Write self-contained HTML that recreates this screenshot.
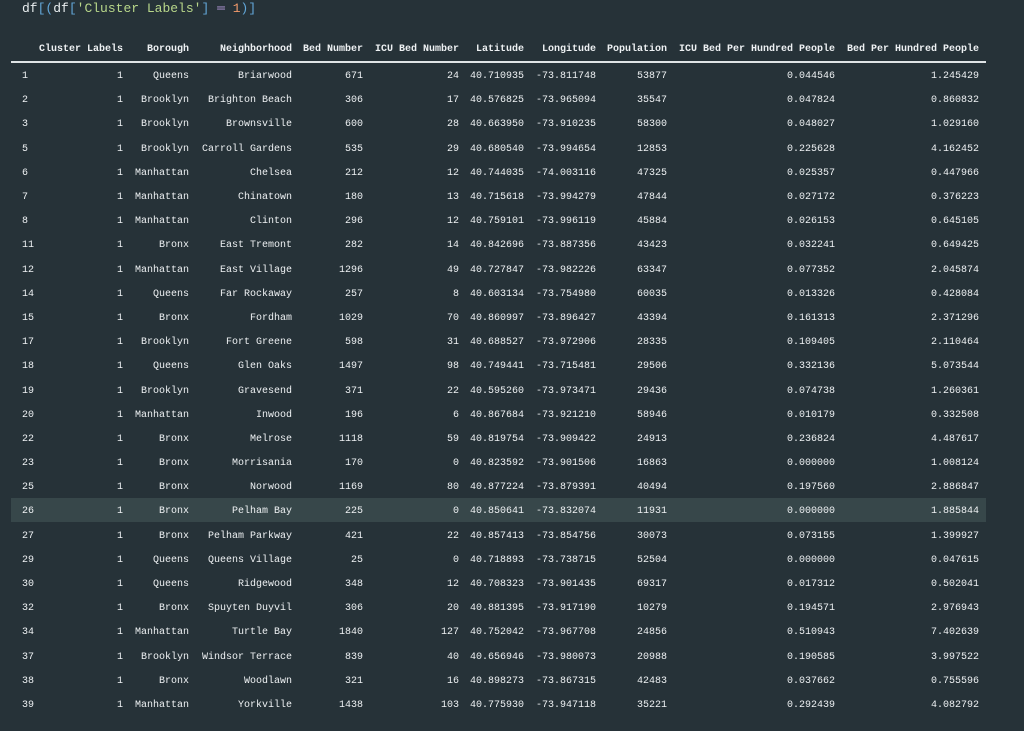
<!DOCTYPE html>
<html><head><meta charset="utf-8">
<style>
html,body{margin:0;padding:0;background:#263238;width:1024px;height:731px;overflow:hidden}
body{font-family:"Liberation Mono","DejaVu Sans Mono",monospace;color:#eef1f3;font-size:10px;position:relative}
.code{position:absolute;left:22px;top:0px;font-size:13px;line-height:18px;color:#e9eef0;white-space:pre}
.b{color:#62a6d8}.s{color:#b8d78a}.o{color:#b79cde}.n{color:#f39a6b}
.r{position:absolute;left:11px;width:975px;height:24px}
.r span{position:absolute;top:8px;white-space:pre;text-align:right;line-height:12px}
.hd span{font-weight:bold}
.r span.i{left:11px;text-align:left}
.c1{right:calc(975px - 112px)}
.c2{right:calc(975px - 178px)}
.c3{right:calc(975px - 281px)}
.c4{right:calc(975px - 352px)}
.c5{right:calc(975px - 448px)}
.c6{right:calc(975px - 513px)}
.c7{right:calc(975px - 585px)}
.c8{right:calc(975px - 656px)}
.c9{right:calc(975px - 824px)}
.c10{right:calc(975px - 968px)}
.rule{position:absolute;left:11px;width:975px;top:61px;height:2px;background:#dfe4e6}
.hl{background:#37474a}
</style></head><body>
<div class="code">df<span class="b">[(</span>df<span class="b">[</span><span class="s">'Cluster Labels'</span><span class="b">]</span> <span class="o">═</span> <span class="n">1</span><span class="b">)]</span></div>
<div class="r hd" style="top:36px"><span class="c1">Cluster Labels</span><span class="c2">Borough</span><span class="c3">Neighborhood</span><span class="c4">Bed Number</span><span class="c5">ICU Bed Number</span><span class="c6">Latitude</span><span class="c7">Longitude</span><span class="c8">Population</span><span class="c9">ICU Bed Per Hundred People</span><span class="c10">Bed Per Hundred People</span></div>
<div class="rule"></div>
<div class="r" style="top:63px"><span class="i">1</span><span class="c1">1</span><span class="c2">Queens</span><span class="c3">Briarwood</span><span class="c4">671</span><span class="c5">24</span><span class="c6">40.710935</span><span class="c7">-73.811748</span><span class="c8">53877</span><span class="c9">0.044546</span><span class="c10">1.245429</span></div>
<div class="r" style="top:87px"><span class="i">2</span><span class="c1">1</span><span class="c2">Brooklyn</span><span class="c3">Brighton Beach</span><span class="c4">306</span><span class="c5">17</span><span class="c6">40.576825</span><span class="c7">-73.965094</span><span class="c8">35547</span><span class="c9">0.047824</span><span class="c10">0.860832</span></div>
<div class="r" style="top:111px"><span class="i">3</span><span class="c1">1</span><span class="c2">Brooklyn</span><span class="c3">Brownsville</span><span class="c4">600</span><span class="c5">28</span><span class="c6">40.663950</span><span class="c7">-73.910235</span><span class="c8">58300</span><span class="c9">0.048027</span><span class="c10">1.029160</span></div>
<div class="r" style="top:136px"><span class="i">5</span><span class="c1">1</span><span class="c2">Brooklyn</span><span class="c3">Carroll Gardens</span><span class="c4">535</span><span class="c5">29</span><span class="c6">40.680540</span><span class="c7">-73.994654</span><span class="c8">12853</span><span class="c9">0.225628</span><span class="c10">4.162452</span></div>
<div class="r" style="top:160px"><span class="i">6</span><span class="c1">1</span><span class="c2">Manhattan</span><span class="c3">Chelsea</span><span class="c4">212</span><span class="c5">12</span><span class="c6">40.744035</span><span class="c7">-74.003116</span><span class="c8">47325</span><span class="c9">0.025357</span><span class="c10">0.447966</span></div>
<div class="r" style="top:184px"><span class="i">7</span><span class="c1">1</span><span class="c2">Manhattan</span><span class="c3">Chinatown</span><span class="c4">180</span><span class="c5">13</span><span class="c6">40.715618</span><span class="c7">-73.994279</span><span class="c8">47844</span><span class="c9">0.027172</span><span class="c10">0.376223</span></div>
<div class="r" style="top:208px"><span class="i">8</span><span class="c1">1</span><span class="c2">Manhattan</span><span class="c3">Clinton</span><span class="c4">296</span><span class="c5">12</span><span class="c6">40.759101</span><span class="c7">-73.996119</span><span class="c8">45884</span><span class="c9">0.026153</span><span class="c10">0.645105</span></div>
<div class="r" style="top:232px"><span class="i">11</span><span class="c1">1</span><span class="c2">Bronx</span><span class="c3">East Tremont</span><span class="c4">282</span><span class="c5">14</span><span class="c6">40.842696</span><span class="c7">-73.887356</span><span class="c8">43423</span><span class="c9">0.032241</span><span class="c10">0.649425</span></div>
<div class="r" style="top:257px"><span class="i">12</span><span class="c1">1</span><span class="c2">Manhattan</span><span class="c3">East Village</span><span class="c4">1296</span><span class="c5">49</span><span class="c6">40.727847</span><span class="c7">-73.982226</span><span class="c8">63347</span><span class="c9">0.077352</span><span class="c10">2.045874</span></div>
<div class="r" style="top:281px"><span class="i">14</span><span class="c1">1</span><span class="c2">Queens</span><span class="c3">Far Rockaway</span><span class="c4">257</span><span class="c5">8</span><span class="c6">40.603134</span><span class="c7">-73.754980</span><span class="c8">60035</span><span class="c9">0.013326</span><span class="c10">0.428084</span></div>
<div class="r" style="top:305px"><span class="i">15</span><span class="c1">1</span><span class="c2">Bronx</span><span class="c3">Fordham</span><span class="c4">1029</span><span class="c5">70</span><span class="c6">40.860997</span><span class="c7">-73.896427</span><span class="c8">43394</span><span class="c9">0.161313</span><span class="c10">2.371296</span></div>
<div class="r" style="top:329px"><span class="i">17</span><span class="c1">1</span><span class="c2">Brooklyn</span><span class="c3">Fort Greene</span><span class="c4">598</span><span class="c5">31</span><span class="c6">40.688527</span><span class="c7">-73.972906</span><span class="c8">28335</span><span class="c9">0.109405</span><span class="c10">2.110464</span></div>
<div class="r" style="top:353px"><span class="i">18</span><span class="c1">1</span><span class="c2">Queens</span><span class="c3">Glen Oaks</span><span class="c4">1497</span><span class="c5">98</span><span class="c6">40.749441</span><span class="c7">-73.715481</span><span class="c8">29506</span><span class="c9">0.332136</span><span class="c10">5.073544</span></div>
<div class="r" style="top:378px"><span class="i">19</span><span class="c1">1</span><span class="c2">Brooklyn</span><span class="c3">Gravesend</span><span class="c4">371</span><span class="c5">22</span><span class="c6">40.595260</span><span class="c7">-73.973471</span><span class="c8">29436</span><span class="c9">0.074738</span><span class="c10">1.260361</span></div>
<div class="r" style="top:402px"><span class="i">20</span><span class="c1">1</span><span class="c2">Manhattan</span><span class="c3">Inwood</span><span class="c4">196</span><span class="c5">6</span><span class="c6">40.867684</span><span class="c7">-73.921210</span><span class="c8">58946</span><span class="c9">0.010179</span><span class="c10">0.332508</span></div>
<div class="r" style="top:426px"><span class="i">22</span><span class="c1">1</span><span class="c2">Bronx</span><span class="c3">Melrose</span><span class="c4">1118</span><span class="c5">59</span><span class="c6">40.819754</span><span class="c7">-73.909422</span><span class="c8">24913</span><span class="c9">0.236824</span><span class="c10">4.487617</span></div>
<div class="r" style="top:450px"><span class="i">23</span><span class="c1">1</span><span class="c2">Bronx</span><span class="c3">Morrisania</span><span class="c4">170</span><span class="c5">0</span><span class="c6">40.823592</span><span class="c7">-73.901506</span><span class="c8">16863</span><span class="c9">0.000000</span><span class="c10">1.008124</span></div>
<div class="r" style="top:474px"><span class="i">25</span><span class="c1">1</span><span class="c2">Bronx</span><span class="c3">Norwood</span><span class="c4">1169</span><span class="c5">80</span><span class="c6">40.877224</span><span class="c7">-73.879391</span><span class="c8">40494</span><span class="c9">0.197560</span><span class="c10">2.886847</span></div>
<div class="r hl" style="top:498px"><span class="i">26</span><span class="c1">1</span><span class="c2">Bronx</span><span class="c3">Pelham Bay</span><span class="c4">225</span><span class="c5">0</span><span class="c6">40.850641</span><span class="c7">-73.832074</span><span class="c8">11931</span><span class="c9">0.000000</span><span class="c10">1.885844</span></div>
<div class="r" style="top:523px"><span class="i">27</span><span class="c1">1</span><span class="c2">Bronx</span><span class="c3">Pelham Parkway</span><span class="c4">421</span><span class="c5">22</span><span class="c6">40.857413</span><span class="c7">-73.854756</span><span class="c8">30073</span><span class="c9">0.073155</span><span class="c10">1.399927</span></div>
<div class="r" style="top:547px"><span class="i">29</span><span class="c1">1</span><span class="c2">Queens</span><span class="c3">Queens Village</span><span class="c4">25</span><span class="c5">0</span><span class="c6">40.718893</span><span class="c7">-73.738715</span><span class="c8">52504</span><span class="c9">0.000000</span><span class="c10">0.047615</span></div>
<div class="r" style="top:571px"><span class="i">30</span><span class="c1">1</span><span class="c2">Queens</span><span class="c3">Ridgewood</span><span class="c4">348</span><span class="c5">12</span><span class="c6">40.708323</span><span class="c7">-73.901435</span><span class="c8">69317</span><span class="c9">0.017312</span><span class="c10">0.502041</span></div>
<div class="r" style="top:595px"><span class="i">32</span><span class="c1">1</span><span class="c2">Bronx</span><span class="c3">Spuyten Duyvil</span><span class="c4">306</span><span class="c5">20</span><span class="c6">40.881395</span><span class="c7">-73.917190</span><span class="c8">10279</span><span class="c9">0.194571</span><span class="c10">2.976943</span></div>
<div class="r" style="top:619px"><span class="i">34</span><span class="c1">1</span><span class="c2">Manhattan</span><span class="c3">Turtle Bay</span><span class="c4">1840</span><span class="c5">127</span><span class="c6">40.752042</span><span class="c7">-73.967708</span><span class="c8">24856</span><span class="c9">0.510943</span><span class="c10">7.402639</span></div>
<div class="r" style="top:644px"><span class="i">37</span><span class="c1">1</span><span class="c2">Brooklyn</span><span class="c3">Windsor Terrace</span><span class="c4">839</span><span class="c5">40</span><span class="c6">40.656946</span><span class="c7">-73.980073</span><span class="c8">20988</span><span class="c9">0.190585</span><span class="c10">3.997522</span></div>
<div class="r" style="top:668px"><span class="i">38</span><span class="c1">1</span><span class="c2">Bronx</span><span class="c3">Woodlawn</span><span class="c4">321</span><span class="c5">16</span><span class="c6">40.898273</span><span class="c7">-73.867315</span><span class="c8">42483</span><span class="c9">0.037662</span><span class="c10">0.755596</span></div>
<div class="r" style="top:692px"><span class="i">39</span><span class="c1">1</span><span class="c2">Manhattan</span><span class="c3">Yorkville</span><span class="c4">1438</span><span class="c5">103</span><span class="c6">40.775930</span><span class="c7">-73.947118</span><span class="c8">35221</span><span class="c9">0.292439</span><span class="c10">4.082792</span></div>
</body></html>
